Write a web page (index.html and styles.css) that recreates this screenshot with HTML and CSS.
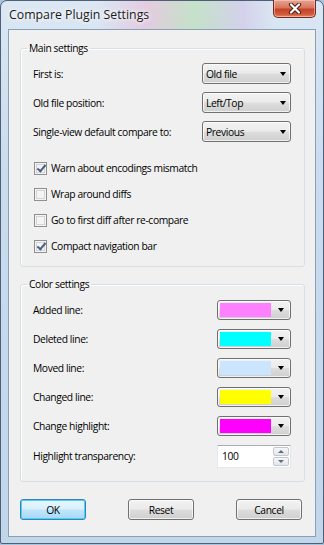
FILE: index.html
```html
<!DOCTYPE html>
<html lang="en">
<head>
  <meta charset="UTF-8" />
  <title>Compare Plugin Settings</title>
  <link rel="stylesheet" href="styles.css">
</head>
<body>
  <div class="window">
    <div class="titlebar">
      <span class="title">Compare Plugin Settings</span>
      <button class="close" title="Close">
        <svg width="16" height="11" viewBox="0 0 16 11">
          <path d="M4 1.5 L12 9.5 M12 1.5 L4 9.5" stroke="#4b2218" stroke-width="4.2" stroke-linecap="round"/>
          <path d="M4 1.5 L12 9.5 M12 1.5 L4 9.5" stroke="#ffffff" stroke-width="2.2" stroke-linecap="round"/>
        </svg>
      </button>
    </div>

    <div class="client">
      <fieldset class="group group-main">
        <legend>Main settings</legend>
        <div class="rows">
          <div class="row">
            <span class="label">First is:</span>
            <div class="combo"><span>Old file</span><i class="arrow"></i></div>
          </div>
          <div class="row">
            <span class="label">Old file position:</span>
            <div class="combo"><span>Left/Top</span><i class="arrow"></i></div>
          </div>
          <div class="row">
            <span class="label">Single-view default compare to:</span>
            <div class="combo"><span>Previous</span><i class="arrow"></i></div>
          </div>
        </div>
        <div class="checks">
          <label class="check"><span class="box checked"></span>Warn about encodings mismatch</label>
          <label class="check"><span class="box"></span>Wrap around diffs</label>
          <label class="check"><span class="box"></span>Go to first diff after re-compare</label>
          <label class="check"><span class="box checked"></span>Compact navigation bar</label>
        </div>
      </fieldset>

      <fieldset class="group group-color">
        <legend>Color settings</legend>
        <div class="rows color-rows">
          <div class="row">
            <span class="label">Added line:</span>
            <div class="combo color-combo"><span class="swatch added"></span><span class="drop"><i class="arrow"></i></span></div>
          </div>
          <div class="row">
            <span class="label">Deleted line:</span>
            <div class="combo color-combo"><span class="swatch deleted"></span><span class="drop"><i class="arrow"></i></span></div>
          </div>
          <div class="row">
            <span class="label">Moved line:</span>
            <div class="combo color-combo"><span class="swatch moved"></span><span class="drop"><i class="arrow"></i></span></div>
          </div>
          <div class="row">
            <span class="label">Changed line:</span>
            <div class="combo color-combo"><span class="swatch changed"></span><span class="drop"><i class="arrow"></i></span></div>
          </div>
          <div class="row">
            <span class="label">Change highlight:</span>
            <div class="combo color-combo"><span class="swatch highlight"></span><span class="drop"><i class="arrow"></i></span></div>
          </div>
          <div class="row row-spin">
            <span class="label">Highlight transparency:</span>
            <div class="spin">
              <span class="spin-value">100</span>
              <span class="spin-buttons">
                <span class="spin-btn"><i class="tri up"></i></span>
                <span class="spin-btn"><i class="tri down"></i></span>
              </span>
            </div>
          </div>
        </div>
      </fieldset>

      <div class="buttons">
        <button class="btn default">OK</button>
        <button class="btn">Reset</button>
        <button class="btn">Cancel</button>
      </div>
    </div>
  </div>
</body>
</html>
```

FILE: styles.css
```css
body {
  margin: 0;
  width: 324px;
  height: 545px;
  overflow: hidden;
  background: #a9c4df;
  font-family: "Open Sans", "Liberation Sans", sans-serif;
  font-size: 10.3px;
  letter-spacing: -0.4px;
  color: #000;
}

.window {
  box-sizing: border-box;
  width: 324px;
  height: 544px;
  padding: 0 7px 6px 7px;
  border: 1px solid #4e6078;
  border-radius: 7px 7px 2px 2px;
  background:
    linear-gradient(90deg, rgba(255,255,255,0) 30%, rgba(240,170,200,0.45) 45%, rgba(170,220,150,0.45) 60%, rgba(200,170,220,0.35) 75%, rgba(255,255,255,0) 85%) top / 100% 29px no-repeat,
    linear-gradient(180deg, #dbe7f3 0%, #cadcee 30%, #c2d6ea 100%);
  display: flex;
  flex-direction: column;
}

.titlebar {
  height: 28px;
  display: flex;
  justify-content: space-between;
  align-items: flex-start;
}

.title {
  margin-top: 5px;
  margin-left: 1px;
  font-size: 12.3px;
  letter-spacing: 0;
  color: #1a1a1a;
  text-shadow: 0 0 6px #ffffff, 0 0 4px #ffffff;
}

.close {
  width: 43px;
  height: 18px;
  margin-top: -1px;
  padding: 0;
  border: 1px solid #6e2a1e;
  border-top: none;
  border-radius: 0 0 5px 5px;
  background: linear-gradient(180deg, #e9a493 0%, #d9755d 45%, #c4432a 55%, #d25a3c 85%, #e58c6c 100%);
  box-shadow: inset 0 0 0 1px rgba(255,220,210,0.5);
  display: flex;
  align-items: center;
  justify-content: center;
}

.client {
  flex: 1;
  background: #f0f0f0;
  border: 1px solid #8aa0b8;
  display: flex;
  flex-direction: column;
}

.group {
  margin: 11px 10px 0 11px;
  padding: 0;
  min-width: 0;
  border: 1px solid #d5dfe5;
  border-radius: 3px;
  box-shadow: inset 1px 1px 0 #ffffff;
}

.group legend {
  margin-left: 6px;
  padding: 0 2px;
  line-height: 14px;
}

.group-color {
  margin-top: 10px;
}

.rows {
  display: flex;
  flex-direction: column;
  gap: 8px;
  padding: 8px 13px 0 12px;
}

.row {
  height: 21px;
  display: flex;
  align-items: center;
  justify-content: space-between;
}

.color-rows {
  gap: 9px;
  padding-top: 9px;
  padding-bottom: 14px;
}

.color-rows .row {
  height: 20px;
}

.color-rows .row-spin {
  height: 22px;
}

.combo {
  box-sizing: border-box;
  width: 89px;
  height: 21px;
  border: 1px solid #707070;
  border-radius: 3px;
  background: linear-gradient(180deg, #f2f2f2 0%, #ebebeb 48%, #dddddd 52%, #cfcfcf 100%);
  box-shadow: inset 0 0 0 1px rgba(255,255,255,0.7);
  display: flex;
  align-items: center;
  justify-content: space-between;
  padding: 0 4px 0 3px;
}

.arrow {
  width: 0;
  height: 0;
  border-left: 3.5px solid transparent;
  border-right: 3.5px solid transparent;
  border-top: 4px solid #000;
}

.color-combo {
  width: 74px;
  height: 20px;
  padding: 0;
  align-items: stretch;
}

.swatch {
  flex: 1;
  margin: 2px 0 2px 2px;
}

.swatch.added { background: #ff80ff; }
.swatch.deleted { background: #00ffff; }
.swatch.moved { background: #cce5ff; }
.swatch.changed { background: #ffff00; }
.swatch.highlight { background: #ff00ff; }

.drop {
  width: 18px;
  display: flex;
  align-items: center;
  justify-content: center;
  padding-left: 1px;
}

.checks {
  display: flex;
  flex-direction: column;
  gap: 10px;
  padding: 18px 0 12px 13px;
}

.check {
  height: 16px;
  display: flex;
  align-items: center;
  gap: 4px;
}

.box {
  box-sizing: border-box;
  width: 13px;
  height: 13px;
  border: 1px solid #8f8f8f;
  background: #f4f4f4;
  box-shadow: inset 0 0 0 1px #f4f4f4, inset 0 0 0 2px #d2d4d6;
  position: relative;
}

.box.checked::after {
  content: "";
  position: absolute;
  left: 3.5px;
  top: 0px;
  width: 3px;
  height: 7px;
  border-right: 2px solid #4a5f86;
  border-bottom: 2px solid #4a5f86;
  transform: rotate(40deg);
}

.spin {
  box-sizing: border-box;
  width: 74px;
  height: 23px;
  border: 1px solid #e3e9ef;
  border-top-color: #abadb3;
  background: #ffffff;
  display: flex;
  align-items: center;
  justify-content: space-between;
  padding: 0 1px 0 4px;
}

.spin-buttons {
  display: flex;
  flex-direction: column;
  gap: 1px;
}

.spin-btn {
  box-sizing: border-box;
  width: 16px;
  height: 9px;
  border: 1px solid #c3c8cf;
  border-radius: 2px;
  background: linear-gradient(180deg, #f7f7f7, #e4e6e8);
  display: flex;
  align-items: center;
  justify-content: center;
}

.tri {
  width: 0;
  height: 0;
  border-left: 3px solid transparent;
  border-right: 3px solid transparent;
}

.tri.up { border-bottom: 3px solid #5c6e85; }
.tri.down { border-top: 3px solid #5c6e85; }

.buttons {
  display: flex;
  justify-content: space-between;
  padding: 17px 13px 0 11px;
}

.btn {
  box-sizing: border-box;
  width: 66px;
  height: 21px;
  padding: 0;
  font-family: inherit;
  font-size: 10.3px;
  letter-spacing: inherit;
  color: #000;
  border: 1px solid #707070;
  border-radius: 3px;
  background: linear-gradient(180deg, #f2f2f2 0%, #ebebeb 48%, #dddddd 52%, #cfcfcf 100%);
  box-shadow: inset 0 0 0 1px rgba(255,255,255,0.7);
}

.btn.default {
  border-color: #3c7fb1;
  background: linear-gradient(180deg, #eaf6fd 0%, #d9f0fc 48%, #bee6fd 52%, #a7d9f5 100%);
  box-shadow: inset 0 0 0 1px #48d3fb;
}
```
